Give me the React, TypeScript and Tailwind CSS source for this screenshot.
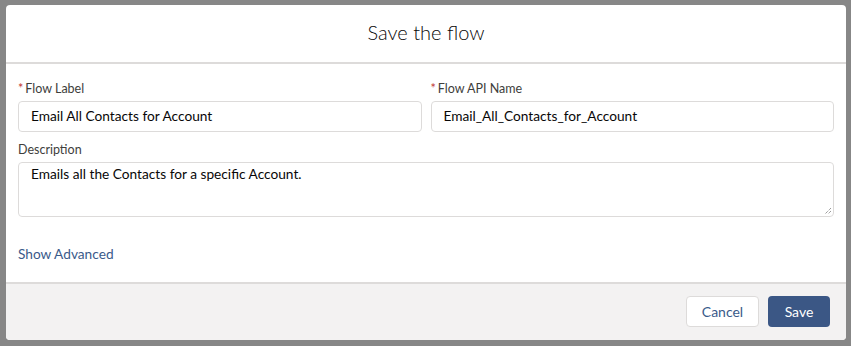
import React from 'react';

const Req = () => <abbr className="mr-[2px] text-[#c23934] no-underline" title="required">*</abbr>;

export default function App() {
  return (
    <div className="h-[346px] w-[851px] bg-[#878787] pt-[5px] pl-[6px] font-['Lato',sans-serif]">
      <div className="flex h-[335px] w-[840px] flex-col overflow-hidden rounded-[4px] bg-white">
        <div className="flex h-[59px] items-center justify-center border-b-2 border-[#dddbda] pb-[3px] text-[20px] font-light text-[#080707]">
          Save the flow
        </div>

        <div className="flex-1 px-[12px] pt-[16px]">
          <div className="grid grid-cols-2 gap-x-[9px]">
            <div>
              <div className="mb-[3px] flex h-[18px] items-center text-[12.5px] text-[#3e3e3c]">
                <Req />Flow Label
              </div>
              <div className="flex h-[31px] items-center rounded-[4px] border border-[#dddbda] px-[12px] text-[13.7px] text-[#080707]">
                Email All Contacts for Account
              </div>
            </div>
            <div>
              <div className="mb-[3px] flex h-[18px] items-center text-[12.5px] text-[#3e3e3c]">
                <Req />Flow API Name
              </div>
              <div className="flex h-[31px] items-center rounded-[4px] border border-[#dddbda] px-[12px] text-[13.7px] text-[#080707]">
                Email_All_Contacts_for_Account
              </div>
            </div>
          </div>

          <div className="mt-[9px] mb-[3px] flex h-[18px] items-center text-[12.5px] text-[#3e3e3c]">Description</div>
          <div className="relative h-[55px] rounded-[4px] border border-[#dddbda] px-[12px] pt-[2px] text-[13.7px] leading-[18px] text-[#080707]">
            Emails all the Contacts for a specific Account.
            <svg className="absolute right-[1px] bottom-[1px]" width="8" height="8" viewBox="0 0 8 8">
              <path d="M7 1 L1 7 M7 4 L4 7" stroke="#707070" strokeWidth="1" strokeDasharray="1 1" />
            </svg>
          </div>

          <div className="mt-[28px] flex h-[18px] items-center text-[13.7px] text-[#3a5a8a]">Show Advanced</div>
        </div>

        <div className="flex h-[58px] items-start justify-end gap-[9px] border-t-2 border-[#dddbda] bg-[#f3f2f2] pt-[12px] pr-[16px]">
          <button className="h-[31px] w-[73px] rounded-[4px] border border-[#dddbda] bg-white text-[14px] text-[#3a5a8a]">
            Cancel
          </button>
          <button className="h-[31px] w-[62px] rounded-[4px] bg-[#3b5785] text-[14px] text-white">
            Save
          </button>
        </div>
      </div>
    </div>
  );
}
